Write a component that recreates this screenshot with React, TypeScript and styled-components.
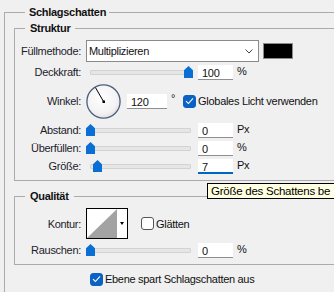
import React from 'react'
import styled, { createGlobalStyle } from 'styled-components'

const GlobalStyle = createGlobalStyle`
  html, body {
    margin: 0;
    padding: 0;
    background: #f0f0f0;
    overflow: hidden;
  }
  body {
    font-family: "Liberation Sans", Arial, sans-serif;
    font-size: 11px;
    letter-spacing: -0.3px;
    color: #1a1a1a;
  }
`

type SliderRowProps = {
  label: string
  value: string
  unit: string
  pos: number
  focused?: boolean
}

const SliderRow: React.FC<SliderRowProps> = ({ label, value, unit, pos, focused }) => (
  <Row $h={16}>
    <Label>{label}</Label>
    <Controls>
      <Slider>
        <Track />
        <Thumb style={{ left: `${pos * 98}px` }} viewBox="0 0 9 12">
          <path d="M0 4.2 L4.5 0 L9 4.2 V12 H0 Z" fill="#0a6fd4" />
        </Thumb>
      </Slider>
      <NumInput $focused={focused}>{value}</NumInput>
      <Unit>{unit}</Unit>
    </Controls>
  </Row>
)

const Checkbox: React.FC<{ checked?: boolean; label: string }> = ({ checked, label }) => (
  <CheckWrap>
    <Box $checked={checked}>
      {checked && (
        <svg width="9" height="8" viewBox="0 0 9 8">
          <path d="M1 4.2 L3.4 6.5 L8 1.3" stroke="#fff" strokeWidth="1.1" fill="none" />
        </svg>
      )}
    </Box>
    <span>{label}</span>
  </CheckWrap>
)

const Dial: React.FC<{ angle: number }> = ({ angle }) => {
  const rad = (angle * Math.PI) / 180
  const x = 17.5 + Math.cos(rad) * 16
  const y = 17.5 - Math.sin(rad) * 16
  return (
    <DialSvg width="35" height="35" viewBox="0 0 35 35">
      <defs>
        <radialGradient id="dialFill" cx="0.45" cy="0.4" r="0.65">
          <stop offset="0" stopColor="#ffffff" />
          <stop offset="0.7" stopColor="#f3f3f3" />
          <stop offset="1" stopColor="#dedede" />
        </radialGradient>
      </defs>
      <circle cx="17.5" cy="17.5" r="16.6" fill="url(#dialFill)" stroke="#4f5d7d" strokeWidth="1.3" />
      <line x1="17.5" y1="17.5" x2={x} y2={y} stroke="#000" strokeWidth="1" />
      <rect x="16.5" y="16.5" width="2.5" height="2.5" fill="#000" />
    </DialSvg>
  )
}

const App: React.FC = () => {
  return (
    <Page>
      <GlobalStyle />
      <Group $outer>
        <Legend $outer>Schlagschatten</Legend>
        <Group>
          <Legend>Struktur</Legend>
          <Stack>
            <Row $h={22}>
              <Label>Füllmethode:</Label>
              <Controls>
                <Select>
                  <span>Multiplizieren</span>
                  <svg width="8" height="5" viewBox="0 0 8 5">
                    <path d="M0.5 0.5 L4 4 L7.5 0.5" stroke="#444" fill="none" />
                  </svg>
                </Select>
                <Swatch />
              </Controls>
            </Row>
            <SliderRow label="Deckkraft:" value="100" unit="%" pos={1} />
            <Row $h={38}>
              <Label>Winkel:</Label>
              <Controls>
                <Dial angle={120} />
                <NumInput $wide>120</NumInput>
                <Degree>°</Degree>
                <Checkbox checked label="Globales Licht verwenden" />
              </Controls>
            </Row>
            <SliderRow label="Abstand:" value="0" unit="Px" pos={0} />
            <SliderRow label="Überfüllen:" value="0" unit="%" pos={0} />
            <SliderRow label="Größe:" value="7" unit="Px" pos={0.07} focused />
          </Stack>
        </Group>
        <Group $spaced>
          <Legend>Qualität</Legend>
          <Stack $gap={3}>
            <Row $h={31}>
              <Label>Kontur:</Label>
              <Controls>
                <Contour>
                  <svg width="30" height="29" viewBox="0 0 30 29">
                    <rect width="30" height="29" fill="#fff" />
                    <path d="M0 29 L30 0 V29 Z" fill="#a3a3a3" />
                  </svg>
                  <ContourDrop />
                </Contour>
                <Checkbox label="Glätten" />
              </Controls>
            </Row>
            <SliderRow label="Rauschen:" value="0" unit="%" pos={0} />
          </Stack>
        </Group>
        <Footer>
          <Checkbox checked label="Ebene spart Schlagschatten aus" />
        </Footer>
      </Group>
      <Tooltip>Größe des Schattens be</Tooltip>
    </Page>
  )
}

export default App

const Page = styled.div`
  position: relative;
  width: 334px;
  height: 292px;
  overflow: hidden;
  padding-top: 6px;
  box-sizing: border-box;
`

const Group = styled.fieldset<{ $outer?: boolean; $spaced?: boolean }>`
  margin: ${p => (p.$outer ? '0 0 0 4px' : p.$spaced ? '9px 0 0 0' : '3px 0 0 0')};
  padding: ${p => (p.$outer ? '0 0 30px 9px' : '5px 0 6px 0')};
  width: ${p => (p.$outer ? '420px' : '380px')};
  border: 1px solid #ababab;
  min-width: 0;
  box-sizing: border-box;
`

const Legend = styled.legend<{ $outer?: boolean }>`
  margin-left: ${p => (p.$outer ? '11px' : '10px')};
  padding: ${p => (p.$outer ? '0 3px 0 4px' : '0 5px')};
  font-weight: bold;
  line-height: 13px;
  color: #111;
`

const Stack = styled.div<{ $gap?: number }>`
  display: flex;
  flex-direction: column;
  gap: ${p => p.$gap ?? 2}px;
`

const Row = styled.div<{ $h: number }>`
  display: grid;
  grid-template-columns: 66px 1fr;
  column-gap: 5px;
  align-items: center;
  height: ${p => p.$h}px;
`

const Label = styled.div`
  text-align: right;
  white-space: nowrap;
  color: #1c1c2c;
`

const Controls = styled.div`
  display: flex;
  align-items: center;
`

const Select = styled.div`
  width: 173px;
  height: 22px;
  box-sizing: border-box;
  background: #fff;
  border: 1px solid #8a8a8a;
  display: flex;
  align-items: center;
  justify-content: space-between;
  padding: 0 5px 0 2px;
  color: #111;
`

const Swatch = styled.div`
  width: 30px;
  height: 16px;
  box-sizing: border-box;
  margin-left: 4px;
  background: #000;
  border: 1px solid #8c8c8c;
`

const Slider = styled.div`
  position: relative;
  width: 107px;
  height: 14px;
  margin-right: 5px;
`

const Track = styled.div`
  position: absolute;
  left: 4px;
  top: 5px;
  width: 99px;
  height: 3px;
  background: #e6e6e6;
  border: 1px solid #d2d2d2;
  border-radius: 1px;
`

const Thumb = styled.svg`
  position: absolute;
  top: 1px;
  width: 9px;
  height: 12px;
`

const NumInput = styled.div<{ $focused?: boolean; $wide?: boolean }>`
  width: ${p => (p.$wide ? '40px' : '35px')};
  height: 15px;
  box-sizing: border-box;
  background: #fff;
  padding: 2px 0 0 4px;
  line-height: 12px;
  color: #111;
  border-bottom: ${p => (p.$focused ? '2px solid #0067c0' : '1px solid #8e8e8e')};
`

const Unit = styled.span`
  margin-left: 4px;
  margin-top: -3px;
  color: #111;
`

const Degree = styled.span`
  margin: -6px 8px 0 4px;
  font-size: 11px;
`

const DialSvg = styled.svg`
  margin-right: 6px;
  display: block;
`

const CheckWrap = styled.label`
  display: inline-flex;
  align-items: center;
  gap: 2px;
  white-space: nowrap;
  color: #111;
`

const Box = styled.span<{ $checked?: boolean }>`
  width: 13px;
  height: 13px;
  box-sizing: border-box;
  border-radius: 3px;
  display: inline-flex;
  align-items: center;
  justify-content: center;
  background: ${p => (p.$checked ? '#0a63c4' : '#fff')};
  border: 1px solid ${p => (p.$checked ? '#0a63c4' : '#555')};
`

const Contour = styled.div`
  display: flex;
  width: 42px;
  height: 31px;
  box-sizing: border-box;
  border: 1px solid #000;
  background: #fff;
  margin-right: 13px;
`

const ContourDrop = styled.div`
  flex: 1;
  display: flex;
  align-items: center;
  justify-content: center;
  &::after {
    content: '';
    border-left: 2.5px solid transparent;
    border-right: 2.5px solid transparent;
    border-top: 3px solid #000;
  }
`

const Footer = styled.div`
  padding: 7px 0 0 76px;
  height: 14px;
  display: flex;
  align-items: center;
`

const Tooltip = styled.div`
  position: absolute;
  left: 207px;
  top: 183px;
  width: 140px;
  height: 16px;
  box-sizing: border-box;
  padding: 1px 0 0 3px;
  line-height: 13px;
  white-space: nowrap;
  background: #ffffe1;
  border: 1px solid #000;
  color: #000;
  font-size: 11.5px;
  letter-spacing: -0.25px;
`
